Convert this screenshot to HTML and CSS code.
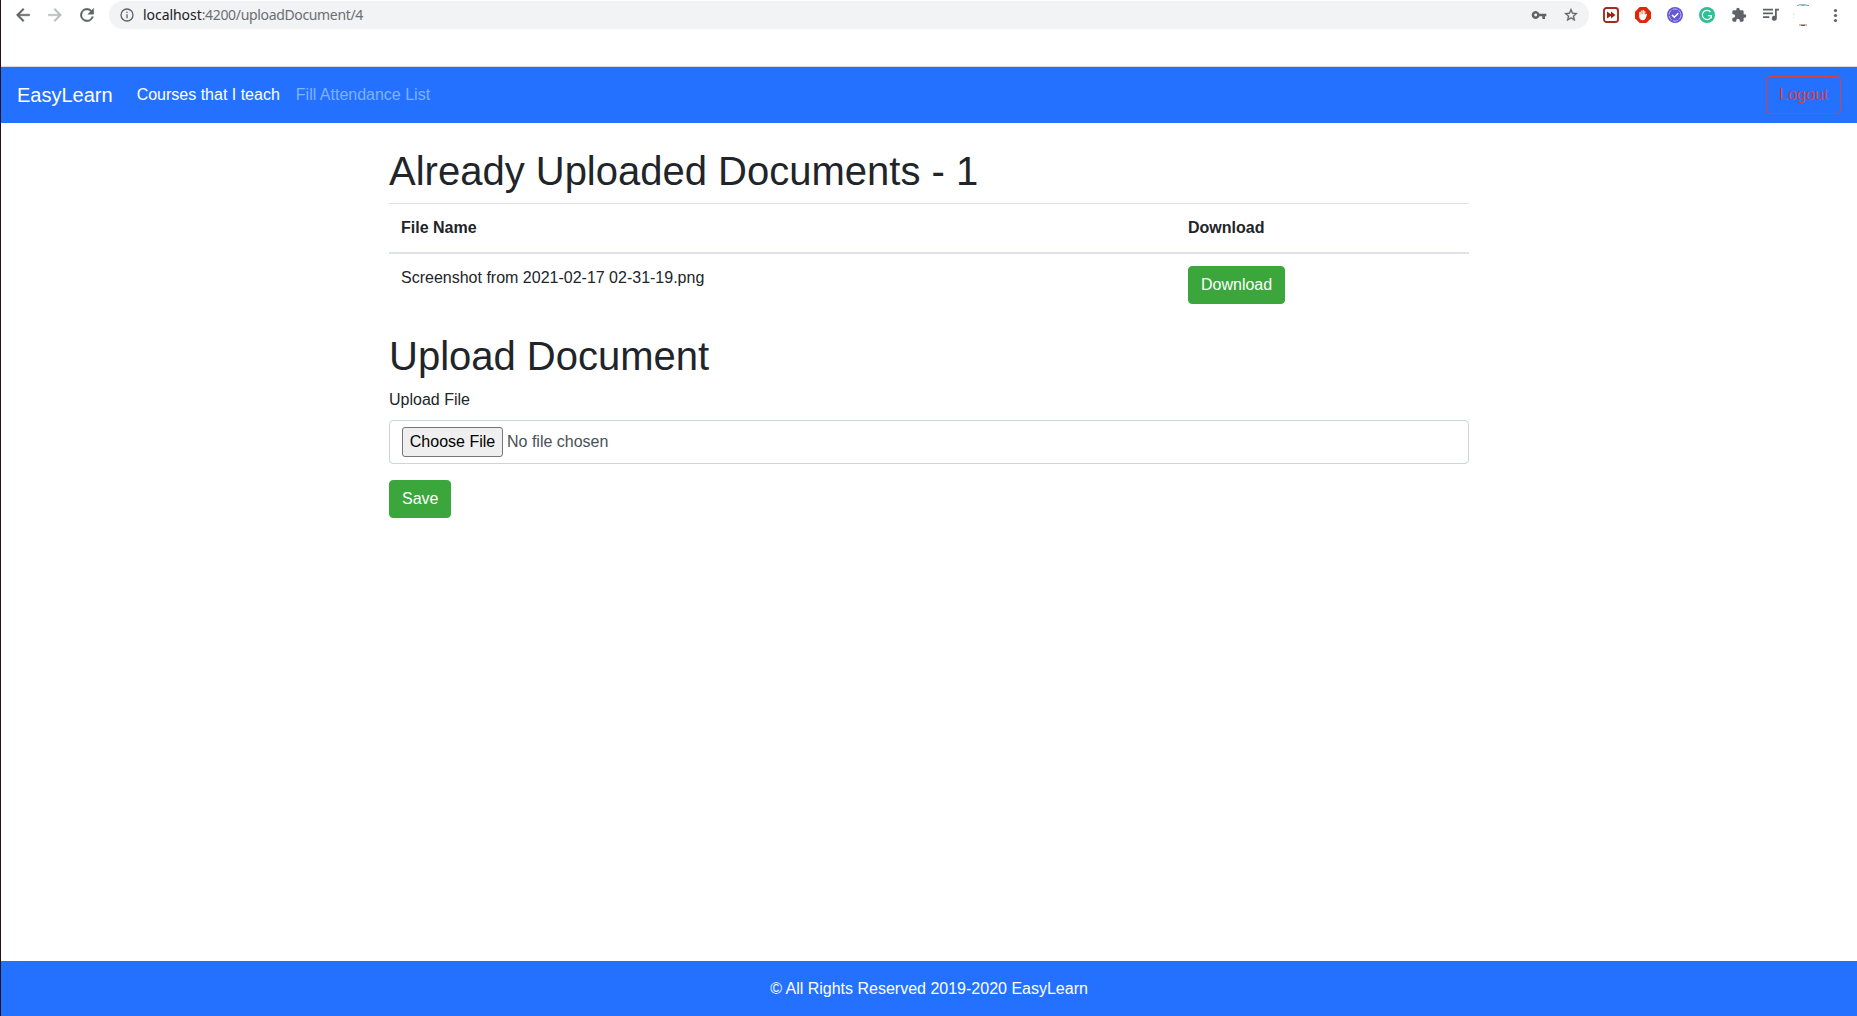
FILE: index.html
```html
<!DOCTYPE html>
<html lang="en">
<head>
<meta charset="utf-8">
<title>EasyLearn</title>
<link rel="stylesheet" href="styles.css">
</head>
<body>
<div class="window">
  <header class="toolbar">
    <div class="history">
      <svg class="icon" viewBox="0 0 24 24"><path d="M20 11H7.8l5.6-5.6L12 4l-8 8 8 8 1.4-1.4L7.8 13H20z"/></svg>
      <svg class="icon disabled" viewBox="0 0 24 24"><path d="M12 4l-1.4 1.4 5.6 5.6H4v2h12.2l-5.6 5.6L12 20l8-8z"/></svg>
      <svg class="icon" viewBox="0 0 24 24"><path d="M17.65 6.35A8 8 0 1 0 19.73 14h-2.08A6 6 0 1 1 12 6c1.66 0 3.14.69 4.22 1.78L13 11h7V4z"/></svg>
    </div>
    <div class="address">
      <svg class="info" viewBox="0 0 24 24"><path d="M11 7h2v2h-2zm0 4h2v6h-2zm1-9a10 10 0 1 0 0 20 10 10 0 0 0 0-20zm0 18a8 8 0 1 1 0-16 8 8 0 0 1 0 16z"/></svg>
      <span class="url"><span class="host">localhost</span>:4200/uploadDocument/4</span>
      <svg class="key" viewBox="0 0 24 24"><path d="M12.65 10a6 6 0 1 0 0 4H17v4h4v-4h2v-4zM7 14.2a2.2 2.2 0 1 1 0-4.4 2.2 2.2 0 0 1 0 4.4z"/></svg>
      <svg class="star" viewBox="0 0 24 24"><path d="M22 9.24l-7.19-.62L12 2 9.19 8.63 2 9.24l5.46 4.73L5.82 21 12 17.27 18.18 21l-1.63-7.03zM12 15.4l-3.76 2.27 1-4.28-3.32-2.88 4.38-.38L12 6.1l1.71 4.04 4.38.38-3.32 2.88 1 4.28z"/></svg>
    </div>
    <div class="extensions">
      <svg viewBox="0 0 16 16"><rect x="1" y="1" width="14" height="14" rx="2.5" fill="#fff" stroke="#a82a1e" stroke-width="1.9"/><path d="M4 4.5L8 7.2V4.5L12.4 8 8 11.5V8.8l-4 2.7z" fill="#a31d14"/></svg>
      <svg viewBox="0 0 16 16"><path d="M4.7 0h6.6L16 4.7v6.6L11.3 16H4.7L0 11.3V4.7z" fill="#dd2706"/><path d="M4.7 5.2v4.9c.3 2 1.5 3.1 3.3 3.1 2.2 0 3-1.3 3.6-2.8l.9-3c.1-.8-.7-1-1.1-.3l-.6 1V4.3c0-.8-1-.8-1 0v2.9h-.4V3.4c0-.8-1.1-.8-1.1 0v3.8h-.4V3.8c0-.8-1.1-.8-1.1 0v3.7h-.5V5.2c0-.8-1.1-.8-1.1 0z" transform="translate(-.5)" fill="#fff"/></svg>
      <svg viewBox="0 0 16 16"><circle cx="8" cy="8" r="8" fill="#6558d3"/><circle cx="8" cy="8" r="6" fill="none" stroke="#c7c2f3" stroke-width=".9" stroke-dasharray="5 1.28"/><path d="M5 8l2.3 2.2 4-4" fill="none" stroke="#fff" stroke-width="1.6"/></svg>
      <svg viewBox="0 0 16 16"><circle cx="8" cy="8" r="8" fill="#30bf94"/><path d="M11.5 5A4.6 4.6 0 1 0 12.5 8.7H9M12.4 8.7v2.6" fill="none" stroke="#fff" stroke-width="1.2"/></svg>
      <svg class="puzzle" viewBox="0 0 24 24"><path d="M20.5 11H19V7a2 2 0 0 0-2-2h-4V3.5a2.5 2.5 0 0 0-5 0V5H4a2 2 0 0 0-2 2v3.8h1.5a2.7 2.7 0 0 1 0 5.4H2V20c0 1.1.9 2 2 2h3.8v-1.5a2.7 2.7 0 0 1 5.4 0V22H17a2 2 0 0 0 2-2v-4h1.5a2.5 2.5 0 0 0 0-5z"/></svg>
      <svg class="queue" viewBox="0 0 16 16"><path d="M0 1.8h10v1.7H0zm0 3.8h10v1.7H0zm0 3.7h6.3V11H0zM12 1.8h4v1.7h-2.2v7.6A2.5 2.5 0 1 1 12 8.8z"/></svg>
      <svg class="avatar" viewBox="0 0 20 22"><path d="M4 1.6l2-.7h2M12 .9l4 .7" stroke="#7b9cae" fill="none"/><path d="M8 1h4" stroke="#2d6b9c"/><path d="M6 21h8" stroke="#9c8778"/><path d="M8 21.3h4" stroke="#65412f"/><path d="M.7 9v2M.7 13v1" stroke="#ddd"/></svg>
      <svg class="menu" viewBox="0 0 16 16"><circle cx="8.5" cy="3.5" r="1.6"/><circle cx="8.5" cy="8.5" r="1.6"/><circle cx="8.5" cy="13.5" r="1.6"/></svg>
    </div>
  </header>

  <nav class="navbar">
    <a class="brand">EasyLearn</a>
    <a class="nav-link active">Courses that I teach</a>
    <a class="nav-link">Fill Attendance List</a>
    <button class="btn btn-outline">Logout</button>
  </nav>

  <main class="content">
    <h1>Already Uploaded Documents - 1</h1>
    <table class="table">
      <thead><tr><th class="name-col">File Name</th><th>Download</th></tr></thead>
      <tbody><tr><td>Screenshot from 2021-02-17 02-31-19.png</td><td><button class="btn btn-success">Download</button></td></tr></tbody>
    </table>
    <h1>Upload Document</h1>
    <div class="label">Upload File</div>
    <div class="file-input"><button class="choose">Choose File</button><span>No file chosen</span></div>
    <button class="btn btn-success">Save</button>
  </main>

  <footer class="footer">© All Rights Reserved 2019-2020 EasyLearn</footer>
</div>
</body>
</html>
```
FILE: styles.css
```css
* { box-sizing: border-box; }
body {
  margin: 0;
  font: 16px/24px "Liberation Sans", Arial, sans-serif;
  color: #212529;
  background: #fff;
}
button { font: inherit; }
svg { display: block; flex: none; }

.window {
  display: flex;
  flex-direction: column;
  height: 1016px;
  border-left: 1px solid #20141a;
}

.toolbar {
  display: flex;
  height: 67px;
  padding-top: 1px;
  border-bottom: 1px solid #d9dadb;
  fill: #5f6368;
}
.history {
  display: flex;
  gap: 12px;
  width: 108px;
  padding: 4px 0 0 12px;
}
.icon {
  width: 20px;
  height: 20px;
  stroke: #5f6368;
  stroke-width: .5;
}
.disabled { fill: #babcbe; stroke: #babcbe; }

.address {
  display: flex;
  align-items: center;
  width: 1480px;
  height: 28px;
  padding: 0 10px 0 10px;
  border-radius: 14px;
  background: #f1f3f4;
}
.info { width: 16px; height: 16px; }
.url {
  margin-left: 8px;
  font: 14px/20px "Noto Sans", sans-serif;
  letter-spacing: -.34px;
  color: #6b6e72;
}
.host { letter-spacing: -.05px; color: #202124; }
.key { width: 16px; height: 16px; margin-left: auto; }
.star {
  width: 16px;
  height: 16px;
  margin-left: 16px;
  stroke: #5f6368;
  stroke-width: .4;
}

.extensions {
  display: flex;
  gap: 16px;
  padding: 6px 0 0 14px;
}
.extensions svg { width: 16px; height: 16px; }
.extensions .avatar { width: 20px; height: 22px; margin: -3px -2px 0; }

.navbar {
  display: flex;
  align-items: center;
  height: 56px;
  padding: 0 16px;
  background: #2471ff;
}
.brand {
  margin-right: 16px;
  font-size: 20px;
  line-height: 30px;
  color: #fff;
}
.nav-link { padding: 0 8px; color: #7fb2ff; }
.nav-link.active { color: #fff; }

.btn {
  height: 38px;
  padding: 6px 12px;
  border: 1px solid;
  border-radius: 4px;
}
.btn-outline {
  width: 75px;
  margin-left: auto;
  padding: 6px 0;
  border-color: #d9413f;
  color: #d9413f;
  background: none;
}
.btn-success {
  border-color: #3aa63c;
  color: #fff;
  background: #3aa63c;
}

.content {
  flex: 1;
  width: 1080px;
  margin-left: 388px;
  padding-top: 24px;
}
h1 {
  margin: 0 0 8px;
  font-size: 40px;
  font-weight: 500;
  line-height: 48px;
}
.table {
  width: 100%;
  margin-bottom: 16px;
  border-spacing: 0;
  table-layout: fixed;
}
th, td {
  padding: 12px;
  text-align: left;
  vertical-align: top;
}
th {
  border-top: 1px solid #dee2e6;
  border-bottom: 2px solid #dee2e6;
}
td .btn { display: block; }
.name-col { width: 787px; }
.label { margin-bottom: 8px; }
.file-input {
  display: flex;
  align-items: center;
  gap: 4px;
  height: 44px;
  margin-bottom: 16px;
  padding: 0 12px;
  border: 1px solid #ced4da;
  border-radius: 4px;
  color: #495057;
}
.choose {
  width: 101px;
  height: 30px;
  padding: 0;
  border: 1px solid #767676;
  border-radius: 3px;
  color: #000;
  background: #efefef;
}

.footer {
  height: 55px;
  padding-top: 16px;
  text-align: center;
  color: #fff;
  background: #2471ff;
}
```
